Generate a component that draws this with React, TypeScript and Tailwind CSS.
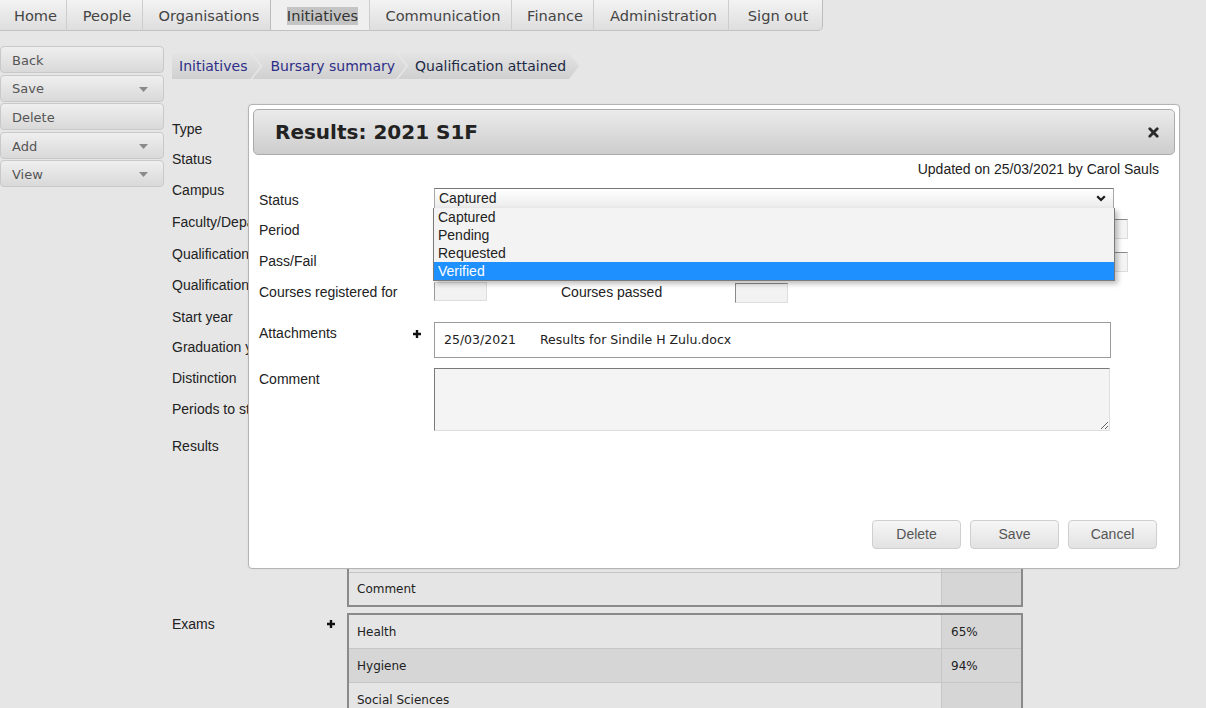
import React from "react";

const NAV = [
  { label: "Home", w: 67 },
  { label: "People", w: 76 },
  { label: "Organisations", w: 128 },
  { label: "Initiatives", w: 100, active: true },
  { label: "Communication", w: 142 },
  { label: "Finance", w: 82 },
  { label: "Administration", w: 135 },
  { label: "Sign out", w: 94 },
];

const SIDE = [
  { label: "Back" },
  { label: "Save", menu: true },
  { label: "Delete" },
  { label: "Add", menu: true },
  { label: "View", menu: true },
];

// label rows of the page behind the dialog
const LABELS: [string, string][] = [
  ["Type", "h-[30px]"],
  ["Status", "h-[30px]"],
  ["Campus", "h-[32px]"],
  ["Faculty/Department", "h-[32px]"],
  ["Qualification", "h-[32px]"],
  ["Qualification type", "h-[30px]"],
  ["Start year", "h-[34px]"],
  ["Graduation year", "h-[26px]"],
  ["Distinction", "h-[36px]"],
  ["Periods to study", "h-[26px]"],
];

const OPTIONS = ["Captured", "Pending", "Requested", "Verified"];

const verdana = "font-['DejaVu_Sans',Verdana,sans-serif]";
const arial = "font-['Liberation_Sans',Arial,sans-serif]";

function Plus() {
  return (
    <svg width="10" height="10" viewBox="0 0 10 10" className="shrink-0">
      <path d="M5 1v8M1 5h8" stroke="#111" strokeWidth="2.4" />
    </svg>
  );
}

function Caret() {
  return (
    <svg width="9" height="5" viewBox="0 0 9 5">
      <path d="M0 0h9L4.5 5z" fill="#8a8a8a" />
    </svg>
  );
}

export default function App() {
  return (
    <div className={`relative w-[1206px] h-[708px] overflow-hidden bg-[#e6e6e6] ${arial}`}>
      {/* top menu */}
      <div className={`flex ${verdana} text-[14.6px] text-[#444]`}>
        {NAV.map((n, i) => (
          <div
            key={n.label}
            style={{ width: n.w }}
            className={`h-[31px] flex items-center justify-center pl-[5px] pt-[2px] border-b border-[#c2c2c2] ${
              i === NAV.length - 1 ? "border-r border-r-[#bdbdbd] rounded-br-[5px]" : "border-r border-r-[#cdcdcd]"
            } ${
              n.active
                ? "bg-[#efefef] border-l border-l-[#bcbcbc] border-r-[#bcbcbc] -ml-px"
                : "bg-gradient-to-b from-[#f3f3f3] to-[#dedede]"
            }`}
          >
            <span className={n.active ? "bg-[#c4c4c4] text-[#333] leading-[18px]" : ""}>{n.label}</span>
          </div>
        ))}
      </div>

      <div className="flex">
        {/* side buttons */}
        <div className={`w-[164px] mt-[15px] flex flex-col gap-[1.6px] ${verdana} text-[13px] text-[#555]`}>
          {SIDE.map((s) => (
            <div
              key={s.label}
              className="h-[27px] flex items-center justify-between pl-[11px] pr-[15px] pt-[2px] rounded-[4px] border border-[#c9c9c9] bg-gradient-to-b from-[#efefef] via-[#e4e4e4] to-[#d9d9d9]"
            >
              <span>{s.label}</span>
              {s.menu && <Caret />}
            </div>
          ))}
        </div>

        {/* main area */}
        <div className="ml-[8px] flex-1">
          <div className={`mt-[21px] flex h-[27px] pt-[1px] ${verdana} text-[14px]`}>
            <div className="flex items-center pl-[7px] pr-[13px] bg-gradient-to-b from-[#e4e4e4] to-[#d0d0d0] text-[#2e2e88] [clip-path:polygon(0_0,calc(100%_-_10px)_0,100%_50%,calc(100%_-_10px)_100%,0_100%)]">
              Initiatives
            </div>
            <div className="-ml-[8px] flex items-center pl-[18px] pr-[11px] bg-gradient-to-b from-[#e4e4e4] to-[#d0d0d0] text-[#2e2e88] [clip-path:polygon(0_0,calc(100%_-_10px)_0,100%_50%,calc(100%_-_10px)_100%,0_100%,10px_50%)]">
              Bursary summary
            </div>
            <div className="-ml-[8px] flex items-center pl-[17px] pr-[13px] bg-gradient-to-b from-[#e4e4e4] to-[#d0d0d0] text-[#1d2a45] [clip-path:polygon(0_0,calc(100%_-_10px)_0,100%_50%,calc(100%_-_10px)_100%,0_100%,10px_50%)]">
              Qualification attained
            </div>
          </div>

          <div className="mt-[35px] text-[14px] text-[#222]">
            {LABELS.map(([l, h]) => (
              <div key={l} className={`${h} flex items-center whitespace-nowrap`}>
                {l}
              </div>
            ))}

            {/* Results */}
            <div className="flex">
              <div className="w-[157px] pt-[16px] leading-[16px]">Results</div>
              <div className="w-[18px]" />
              <div className={`mt-[11px] w-[676px] ${verdana} text-[12px] text-[#222]`}>
                <div className="border-x-2 border-b-2 border-[#8a8a8a]">
                  {["2021 S1F", "2020 S2F", "2020 S1F", "2019 S2F"].map((r) => (
                    <div key={r} className="h-[35px] flex border-b border-[#c6c6c6]">
                      <div className="flex-1 flex items-center pl-[8px] bg-[#e5e5e5]">{r}</div>
                      <div className="w-[80px] border-l border-[#c6c6c6] bg-[#d6d6d6]" />
                    </div>
                  ))}
                  <div className="h-[32px] flex">
                    <div className="flex-1 flex items-center pl-[8px] bg-[#e5e5e5]">Comment</div>
                    <div className="w-[80px] border-l border-[#c6c6c6] bg-[#d6d6d6]" />
                  </div>
                </div>
              </div>
            </div>

            {/* Exams */}
            <div className="flex mt-[6px]">
              <div className="w-[157px] pt-[3px] leading-[16px]">Exams</div>
              <div className="w-[18px] pt-[6px] -ml-[3px] mr-[3px]">
                <Plus />
              </div>
              <div className={`w-[676px] ${verdana} text-[12px] text-[#222]`}>
                <div className="border-x-2 border-t-2 border-[#8a8a8a]">
                  {[
                    ["Health", "65%", "bg-[#e5e5e5]"],
                    ["Hygiene", "94%", "bg-[#d6d6d6]"],
                    ["Social Sciences", "", "bg-[#e5e5e5]"],
                  ].map(([n, p, bg]) => (
                    <div key={n} className="h-[34px] flex border-b border-[#c6c6c6]">
                      <div className={`flex-1 flex items-center pl-[8px] ${bg}`}>{n}</div>
                      <div className="w-[80px] flex items-center pl-[9px] border-l border-[#c6c6c6] bg-[#d6d6d6]">{p}</div>
                    </div>
                  ))}
                </div>
              </div>
            </div>
          </div>
        </div>
      </div>

      {/* dialog */}
      <div className="absolute left-[248px] top-[104px] w-[932px] h-[465px] bg-white border border-[#b4b4b4] rounded-[4px] p-[4px] flex flex-col shadow-[0_0_2px_rgba(0,0,0,0.08)]">
        <div className="h-[46px] shrink-0 flex items-center justify-between pl-[21px] pr-[15px] rounded-[5px] border border-[#ababab] bg-gradient-to-b from-[#ebebeb] to-[#cdcdcd]">
          <span className={`${verdana} font-bold text-[20px] text-[#222]`}>Results: 2021 S1F</span>
          <svg width="11" height="11" viewBox="0 0 11 11">
            <path d="M1.8 1.8l7.4 7.4M9.2 1.8l-7.4 7.4" stroke="#2b2b2b" strokeWidth="2.8" strokeLinecap="round" />
          </svg>
        </div>

        <div className="mt-[6px] h-[16px] leading-[16px] text-right pr-[16px] text-[14px] text-[#222]">
          Updated on 25/03/2021 by Carol Sauls
        </div>

        <div className="pl-[6px] text-[14px] text-[#222]">
          {/* status */}
          <div className="mt-[11px] flex">
            <div className="w-[175px] pt-[4px] leading-[16px]">Status</div>
            <div className="relative">
              <div className="w-[680px] h-[21px] flex items-center justify-between pl-[4px] pr-[7px] border border-[#a8a8a8] border-t-[#777] bg-gradient-to-b from-white to-[#ebebeb]">
                <span>Captured</span>
                <svg width="10" height="7" viewBox="0 0 10 7">
                  <path d="M1.2 1.2L5 5l3.8-3.8" stroke="#1a1a1a" strokeWidth="2.2" fill="none" />
                </svg>
              </div>
              <div className="absolute z-10 left-[-1px] top-[20px] w-[682px] bg-[#f3f3f3] border-x border-b border-[#7a7a7a] shadow-[3px_3px_5px_rgba(0,0,0,0.25)]">
                {OPTIONS.map((o) => (
                  <div
                    key={o}
                    className={`h-[18px] leading-[18px] pl-[4px] ${o === "Verified" ? "bg-[#1e90ff] text-white" : ""}`}
                  >
                    {o}
                  </div>
                ))}
              </div>
            </div>
          </div>

          {/* period */}
          <div className="mt-[10px] flex">
            <div className="w-[175px] pt-[3px] leading-[16px]">Period</div>
            <div className="w-[694px] h-[20px] border border-[#dcdcdc] border-t-[#8a8a8a] bg-[#f4f4f4]" />
          </div>

          {/* pass/fail */}
          <div className="mt-[13px] flex">
            <div className="w-[175px] pt-[1px] leading-[16px]">Pass/Fail</div>
            <div className="w-[694px] h-[20px] border border-[#dcdcdc] border-t-[#8a8a8a] bg-[#f4f4f4]" />
          </div>

          {/* courses */}
          <div className="mt-[10px] flex">
            <div className="w-[175px] pt-[2px] leading-[16px]">Courses registered for</div>
            <div className="w-[53px] h-[19px] border border-[#dedede] border-l-[#9a9a9a] bg-[#f2f2f2]" />
            <div className="w-[248px] pl-[74px] pt-[2px] leading-[16px]">Courses passed</div>
            <div className="mt-[1px] w-[53px] h-[20px] border border-[#dedede] border-l-[#8a8a8a] border-t-[#8a8a8a] bg-[#f2f2f2]" />
          </div>

          {/* attachments */}
          <div className="mt-[19px] flex">
            <div className="w-[175px] pt-[3px] pr-[12px] flex justify-between leading-[16px]">
              <span>Attachments</span>
              <span className="pt-[4px]">
                <Plus />
              </span>
            </div>
            <div className={`w-[677px] h-[36px] flex items-center pl-[9px] border border-[#9a9a9a] ${verdana} text-[12.5px] text-[#222]`}>
              <span className="w-[96px]">25/03/2021</span>
              <span>Results for Sindile H Zulu.docx</span>
            </div>
          </div>

          {/* comment */}
          <div className="mt-[10px] flex">
            <div className="w-[175px] pt-[3px] leading-[16px]">Comment</div>
            <textarea
              readOnly
              className="w-[676px] h-[63px] block border border-[#dedede] border-l-[#7a7a7a] border-t-[#7a7a7a] bg-[#f4f4f4] outline-none"
            />
          </div>
        </div>

        <div className="mt-auto mb-[15px] mr-[18px] flex justify-end gap-[9px] text-[14px] text-[#555]">
          {["Delete", "Save", "Cancel"].map((b) => (
            <div
              key={b}
              className="w-[89px] h-[29px] flex items-center justify-center rounded-[4px] border border-[#cfcfcf] bg-gradient-to-b from-[#f6f6f6] via-[#ececec] to-[#e2e2e2]"
            >
              {b}
            </div>
          ))}
        </div>
      </div>
    </div>
  );
}
